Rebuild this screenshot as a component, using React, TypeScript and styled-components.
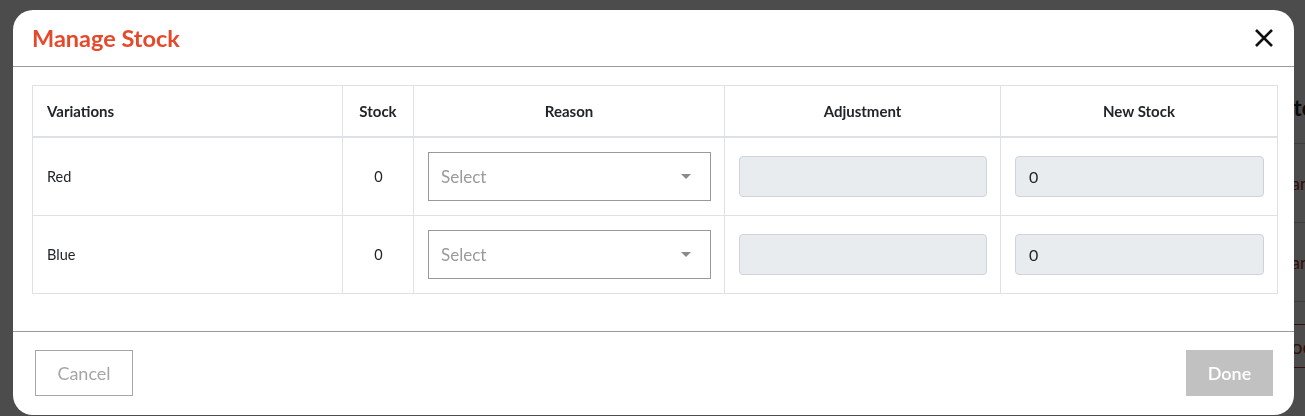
import React from 'react';
import styled, { createGlobalStyle } from 'styled-components';

const GlobalStyle = createGlobalStyle`
  html, body {
    margin: 0;
    padding: 0;
    width: 100%;
    height: 100%;
    overflow: hidden;
    background: #ffffff;
    font-family: Lato, "Open Sans", sans-serif;
  }
`;

/* page behind the dialog, mostly hidden */
const BgPage = styled.div`
  display: flex;
  flex-direction: column;
  padding: 94px 0 0 1276px;
  width: 1305px;
  box-sizing: border-box;
  height: 416px;
  overflow: hidden;
`;

const BgTitle = styled.div`
  font-size: 22px;
  font-weight: 700;
  color: #222;
  white-space: nowrap;
  padding: 0 0 22px 6px;
  border-bottom: 1px solid #ccc;
`;

const BgRow = styled.div`
  height: 78px;
  display: flex;
  align-items: center;
  color: #a0322a;
  font-size: 17px;
  white-space: nowrap;
  border-bottom: 1px solid #ccc;
`;

const BgButton = styled.div`
  margin-top: 22px;
  width: 120px;
  height: 42px;
  border-top: 1px solid #b03a30;
  border-bottom: 1px solid #b03a30;
  display: flex;
  align-items: center;
  padding-left: 2px;
  color: #a0322a;
  font-size: 20px;
`;

const Overlay = styled.div`
  position: fixed;
  inset: 0;
  background: rgba(0, 0, 0, 0.7);
`;

const Dialog = styled.div`
  position: absolute;
  top: 10px;
  left: 13px;
  width: 1281px;
  height: 405px;
  background: #fff;
  border-radius: 20px;
  display: flex;
  flex-direction: column;
  overflow: hidden;
`;

const Header = styled.div`
  height: 56px;
  border-bottom: 1px solid #9a9a9a;
  display: flex;
  align-items: center;
  justify-content: space-between;
  padding: 0 18px 0 19px;
  flex-shrink: 0;
`;

const Title = styled.h2`
  margin: 0;
  font-size: 23.5px;
  font-weight: 700;
  color: #e5492c;
`;

const CloseButton = styled.button`
  border: none;
  background: none;
  padding: 0;
  width: 24px;
  height: 24px;
  display: flex;
  align-items: center;
  justify-content: center;
  cursor: pointer;
`;

const Body = styled.div`
  padding: 18px 17px 37px 19px;
  border-bottom: 1px solid #9a9a9a;
`;

const Table = styled.table`
  width: 100%;
  border-collapse: collapse;
  table-layout: fixed;
  color: #212529;
`;

const Th = styled.th<{ $align?: string; $w: number }>`
  width: ${(p) => p.$w}px;
  height: 51px;
  padding: 0 14px;
  font-size: 15px;
  font-weight: 700;
  text-align: ${(p) => p.$align || 'center'};
  border: 1px solid #dee2e6;
  border-bottom: 2px solid #dee2e6;
  box-sizing: border-box;
`;

const Td = styled.td<{ $align?: string }>`
  height: 77px;
  padding: 0 13px 0 14px;
  font-size: 14.5px;
  text-align: ${(p) => p.$align || 'left'};
  border: 1px solid #dee2e6;
  vertical-align: middle;
`;

const SelectWrap = styled.div`
  position: relative;
  height: 49px;
  border: 1px solid #999;
  box-sizing: border-box;
  display: flex;
  align-items: center;
`;

const SelectField = styled.select`
  appearance: none;
  border: none;
  background: transparent;
  width: 100%;
  height: 100%;
  padding: 0 12px;
  font-family: inherit;
  font-size: 17px;
  color: #9a9a9a;
  outline: none;
`;

const Caret = styled.span`
  position: absolute;
  right: 19px;
  top: 50%;
  margin-top: -2px;
  width: 0;
  height: 0;
  border-left: 5px solid transparent;
  border-right: 5px solid transparent;
  border-top: 5px solid #8a8a8a;
  pointer-events: none;
`;

const Field = styled.input`
  width: 100%;
  height: 41px;
  box-sizing: border-box;
  border: 1px solid #ced4da;
  border-radius: 4px;
  background: #e9ecef;
  padding: 0 13px;
  font-family: inherit;
  font-size: 16px;
  color: #212529;
  outline: none;
`;

const Footer = styled.div`
  display: flex;
  justify-content: space-between;
  padding: 18px 21px 0 22px;
`;

const CancelButton = styled.button`
  width: 98px;
  height: 46px;
  border: 1px solid #a6a6a6;
  background: #fff;
  color: #a6a6a6;
  font-family: inherit;
  font-size: 18px;
`;

const DoneButton = styled.button`
  width: 87px;
  height: 46px;
  border: none;
  background: #c1c1c1;
  color: #fff;
  font-family: inherit;
  font-size: 18px;
  font-weight: 600;
`;

const variations = ['Red', 'Blue'];

const App: React.FC = () => {
  return (
    <>
      <GlobalStyle />
      <BgPage>
        <BgTitle>Stock</BgTitle>
        <BgRow>Manage</BgRow>
        <BgRow>Manage</BgRow>
        <BgButton>Cook</BgButton>
      </BgPage>
      <Overlay>
        <Dialog>
          <Header>
            <Title>Manage Stock</Title>
            <CloseButton aria-label="Close">
              <svg width="20" height="20" viewBox="0 0 20 20">
                <path d="M2 2 L18 18 M18 2 L2 18" stroke="#111" strokeWidth="2.6" strokeLinecap="butt" />
              </svg>
            </CloseButton>
          </Header>
          <Body>
            <Table>
              <thead>
                <tr>
                  <Th $w={310} $align="left">Variations</Th>
                  <Th $w={71}>Stock</Th>
                  <Th $w={311}>Reason</Th>
                  <Th $w={276}>Adjustment</Th>
                  <Th $w={277}>New Stock</Th>
                </tr>
              </thead>
              <tbody>
                {variations.map((v) => (
                  <tr key={v}>
                    <Td>{v}</Td>
                    <Td $align="center">0</Td>
                    <Td>
                      <SelectWrap>
                        <SelectField defaultValue="">
                          <option value="">Select</option>
                        </SelectField>
                        <Caret />
                      </SelectWrap>
                    </Td>
                    <Td>
                      <Field readOnly value="" />
                    </Td>
                    <Td>
                      <Field readOnly value="0" />
                    </Td>
                  </tr>
                ))}
              </tbody>
            </Table>
          </Body>
          <Footer>
            <CancelButton>Cancel</CancelButton>
            <DoneButton>Done</DoneButton>
          </Footer>
        </Dialog>
      </Overlay>
    </>
  );
};

export default App;
